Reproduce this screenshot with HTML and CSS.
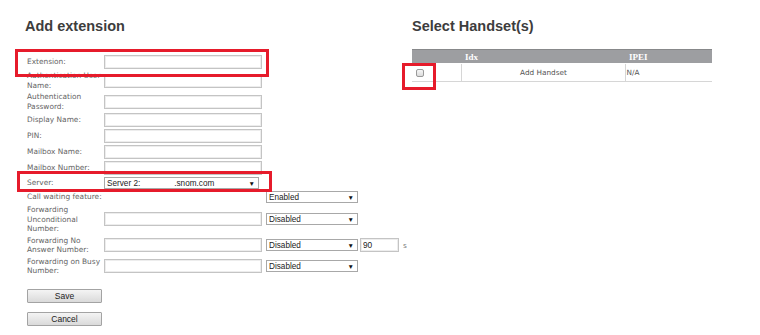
FILE: index.html
```html
<!DOCTYPE html>
<html lang="en">
<head>
    <meta charset="UTF-8">
    <meta name="viewport" content="width=device-width, initial-scale=1.0">
    <title>Add extension</title>
    <link rel="stylesheet" href="styles.css">
</head>
<body>
    <div class="page">
        <!-- Extension form -->
        <section class="col-left">
            <h2>Add extension</h2>
            <table class="ext-form">
                <colgroup>
                    <col class="c-label">
                    <col class="c-input">
                    <col class="c-select">
                    <col class="c-secs">
                    <col class="c-unit">
                </colgroup>
                <tr>
                    <td class="lbl">Extension:</td>
                    <td><input type="text" class="txt"></td>
                </tr>
                <tr>
                    <td class="lbl">Authentication User<br>Name:</td>
                    <td><input type="text" class="txt"></td>
                </tr>
                <tr>
                    <td class="lbl">Authentication<br>Password:</td>
                    <td><input type="password" class="txt"></td>
                </tr>
                <tr>
                    <td class="lbl">Display Name:</td>
                    <td><input type="text" class="txt"></td>
                </tr>
                <tr>
                    <td class="lbl">PIN:</td>
                    <td><input type="text" class="txt"></td>
                </tr>
                <tr>
                    <td class="lbl">Mailbox Name:</td>
                    <td><input type="text" class="txt"></td>
                </tr>
                <tr>
                    <td class="lbl">Mailbox Number:</td>
                    <td><input type="text" class="txt"></td>
                </tr>
                <tr>
                    <td class="lbl">Server:</td>
                    <td>
                        <div class="sel sel-server">
                            <span>Server 2:<span class="redact"></span>.snom.com</span>
                            <span class="arrow">&#9660;</span>
                        </div>
                    </td>
                </tr>
                <tr>
                    <td class="lbl" colspan="2">Call waiting feature:</td>
                    <td><div class="sel"><span>Enabled</span><span class="arrow">&#9660;</span></div></td>
                </tr>
                <tr>
                    <td class="lbl">Forwarding<br>Unconditional<br>Number:</td>
                    <td><input type="text" class="txt"></td>
                    <td><div class="sel"><span>Disabled</span><span class="arrow">&#9660;</span></div></td>
                </tr>
                <tr>
                    <td class="lbl">Forwarding No<br>Answer Number:</td>
                    <td><input type="text" class="txt"></td>
                    <td><div class="sel"><span>Disabled</span><span class="arrow">&#9660;</span></div></td>
                    <td><input type="text" class="txt secs" value="90"></td>
                    <td class="unit">s</td>
                </tr>
                <tr>
                    <td class="lbl">Forwarding on Busy<br>Number:</td>
                    <td><input type="text" class="txt"></td>
                    <td><div class="sel"><span>Disabled</span><span class="arrow">&#9660;</span></div></td>
                </tr>
            </table>
            <div class="actions">
                <button type="button" class="btn">Save</button>
                <button type="button" class="btn">Cancel</button>
            </div>
        </section>

        <!-- Handset selection -->
        <section class="col-right">
            <h2>Select Handset(s)</h2>
            <table class="handsets">
                <colgroup>
                    <col class="h-check">
                    <col class="h-idx">
                    <col class="h-ipei">
                </colgroup>
                <thead>
                    <tr>
                        <th></th>
                        <th>Idx</th>
                        <th>IPEI</th>
                    </tr>
                </thead>
                <tbody>
                    <tr>
                        <td><span class="check"></span></td>
                        <td class="center">Add Handset</td>
                        <td>N/A</td>
                    </tr>
                </tbody>
            </table>
        </section>

        <!-- annotation boxes -->
        <div class="mark mark-ext"></div>
        <div class="mark mark-server"></div>
        <div class="mark mark-check"></div>
    </div>
</body>
</html>
```

FILE: styles.css
```css
body {
    margin: 0;
    background: #fff;
    font-family: "DejaVu Sans", Verdana, sans-serif;
    color: #666;
}
.page {
    position: relative;
    display: flex;
    padding: 18px 0 0 25px;
    height: 317px;
}
h2 {
    margin: 0;
    font-family: "Liberation Sans", Arial, sans-serif;
    font-size: 14.5px;
    line-height: 17px;
    font-weight: bold;
    color: #3d3d3d;
}
.col-left {
    width: 387px;
}
.col-right {
    width: 300px;
}

/* form table */
.ext-form {
    margin-top: 19px;
    border-collapse: collapse;
    table-layout: fixed;
    width: 386px;
}
.c-label { width: 79px; }
.c-input { width: 162px; }
.c-select { width: 94px; }
.c-secs { width: 41px; }
.c-unit { width: 10px; }
.ext-form td {
    padding: 1px 0;
    vertical-align: middle;
}
.lbl {
    padding-left: 2px !important;
    font-size: 7.4px;
    line-height: 9.5px;
    color: #646464;
    white-space: nowrap;
}
.txt {
    display: block;
    box-sizing: border-box;
    width: 158px;
    height: 14px;
    margin: 0;
    padding: 0 2px;
    border: 1px solid #c4c4c4;
    box-shadow: inset 0 0 0 1px #ededed;
    background: #fff;
    font-family: "Liberation Sans", Arial, sans-serif;
    font-size: 8.3px;
    color: #222;
    outline: none;
}
.txt.secs {
    width: 39px;
}
.unit {
    font-size: 7.3px;
    color: #777;
    padding-left: 2px !important;
}
.sel {
    display: flex;
    justify-content: space-between;
    align-items: center;
    box-sizing: border-box;
    width: 92px;
    height: 12px;
    padding: 0 3px 0 2px;
    border: 1px solid #a8a8a8;
    background: #fff;
    font-family: "Liberation Sans", Arial, sans-serif;
    font-size: 8.2px;
    color: #222;
    white-space: nowrap;
}
.sel-server {
    width: 155px;
}
.redact {
    display: inline-block;
    width: 34px;
}
.arrow {
    font-size: 6.5px;
    color: #111;
}

.actions {
    margin-top: 12.5px;
    padding-left: 2px;
}
.btn {
    display: block;
    box-sizing: border-box;
    width: 75px;
    height: 14px;
    margin: 0 0 9px;
    padding: 0;
    border: 1px solid #a3a3a3;
    border-radius: 1px;
    background: linear-gradient(#f4f4f4, #dadada);
    font-family: "Liberation Sans", Arial, sans-serif;
    font-size: 8.5px;
    color: #222;
}

/* handset table */
.handsets {
    margin-top: 14px;
    width: 300px;
    border-collapse: collapse;
    table-layout: fixed;
}
.h-check { width: 49px; }
.h-idx { width: 164px; }
.h-ipei { width: 87px; }
.handsets th {
    height: 13px;
    padding: 0 0 0 4px;
    border-top: 1px solid #87888a;
    border-bottom: 1px solid #fff;
    background: #9d9ea1;
    font-family: "Liberation Serif", "Times New Roman", serif;
    font-size: 9px;
    font-weight: bold;
    color: #fff;
    text-align: left;
    vertical-align: middle;
}
.handsets td {
    height: 17px;
    padding: 0 0 0 1px;
    border: 1px solid #d6d6d6;
    border-top: none;
    font-size: 7.3px;
    color: #555;
    vertical-align: middle;
}
.handsets td:first-child {
    border-left: none;
    padding-left: 4px;
}
.handsets td:last-child {
    border-right: none;
}
.handsets .center {
    text-align: center;
}
.check {
    display: block;
    box-sizing: border-box;
    width: 8px;
    height: 8px;
    border: 1px solid #9a9a9a;
    border-radius: 2px;
    background: linear-gradient(#f6f6f6, #dcdcdc);
}

/* red annotation boxes */
.mark {
    position: absolute;
    box-sizing: border-box;
    border: 3px solid #e61b2b;
}
.mark-ext {
    left: 15px;
    top: 49px;
    width: 254px;
    height: 28px;
}
.mark-server {
    left: 17px;
    top: 171px;
    width: 255px;
    height: 21px;
}
.mark-check {
    left: 402px;
    top: 63px;
    width: 34px;
    height: 27px;
}
```
